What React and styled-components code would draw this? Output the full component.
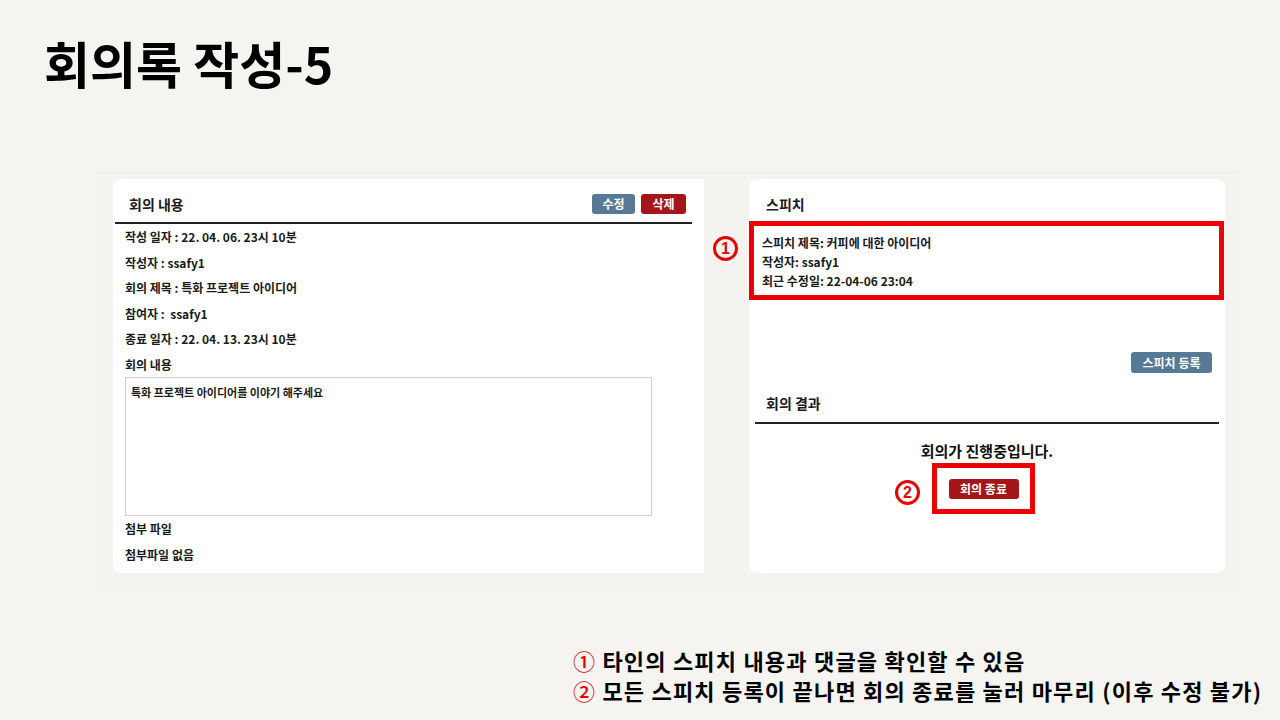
import React from "react";
import styled, { createGlobalStyle } from "styled-components";

const GlobalStyle = createGlobalStyle`
  html, body {
    margin: 0;
    padding: 0;
    background: #f5f4f0;
  }
  body {
    width: 1280px;
    height: 720px;
    overflow: hidden;
    font-family: "Noto Sans CJK KR", "Noto Sans", sans-serif;
    color: #111;
  }
  * { box-sizing: border-box; }
`;

const Slide = styled.div`
  width: 1280px;
  height: 720px;
  display: flex;
  flex-direction: column;
`;

const Title = styled.h1`
  margin: 34px 0 0 44px;
  font-size: 50px;
  line-height: 56px;
  font-weight: 700;
  letter-spacing: 0;
  color: #000;
`;

const Frame = styled.div`
  margin: 82px 0 0 96px;
  width: 1142px;
  height: 416px;
  background: #f4f3ef;
  border-top: 1px solid #ebeae5;
  display: flex;
  gap: 45px;
  padding: 6px 13px 15px 17px;
`;

const Card = styled.section`
  width: ${(p) => p.$w}px;
  background: #fff;
  border-radius: ${(p) => (p.$square ? "8px 0 0 8px" : "8px")};
  display: flex;
  flex-direction: column;
`;

const LeftInner = styled.div`
  padding: 0 12px 0 2px;
`;

const CardHeader = styled.div`
  display: flex;
  align-items: center;
  justify-content: space-between;
  height: 20px;
  margin: ${(p) => p.$m || "15px 6px 8px 14px"};
`;

const HeaderText = styled.h2`
  margin: 0;
  font-size: 14px;
  line-height: 20px;
  font-weight: 700;
  color: #1a1a1a;
`;

const ButtonGroup = styled.div`
  display: flex;
  gap: 6px;
`;

const Btn = styled.button`
  border: none;
  border-radius: 3px;
  height: ${(p) => p.$h || 20}px;
  width: ${(p) => p.$w}px;
  padding: 0;
  background: ${(p) => (p.$tone === "red" ? "#a3161a" : "#567a95")};
  color: #fff;
  font-family: "Noto Sans CJK KR", sans-serif;
  font-size: 12px;
  font-weight: 700;
  line-height: 1;
`;

const Divider = styled.div`
  height: 2px;
  background: #222;
  margin: ${(p) => p.$m || "0"};
`;

const Body = styled.div`
  padding-left: 10px;
`;

const Row = styled.div`
  font-size: 12px;
  line-height: 25.5px;
  height: 25.5px;
  font-weight: 600;
  color: #1a1a1a;
  white-space: pre;
`;

const ContentBox = styled.div`
  width: 527px;
  height: 139px;
  border: 1px solid #cfcfcf;
  padding: 6px 5px;
  font-size: 11px;
  line-height: 16px;
  font-weight: 600;
  color: #1a1a1a;
`;

const SpeechBox = styled.div`
  position: relative;
  margin-right: 1px;
  border: 5px solid #ee0000;
  padding: 7px 8px 5px;
`;

const SpeechLine = styled.div`
  font-size: 12px;
  line-height: 19px;
  font-weight: 600;
  color: #1a1a1a;
`;

const Marker = styled.span`
  position: absolute;
  left: ${(p) => p.$l}px;
  top: ${(p) => p.$t}px;
  width: 25px;
  height: 25px;
  border-radius: 50%;
  border: 3px solid #e60000;
  color: #e60000;
  font-size: 16px;
  font-weight: 700;
  line-height: 1;
  display: flex;
  align-items: center;
  justify-content: center;
  font-family: "Liberation Sans", sans-serif;
`;

const ActionRow = styled.div`
  display: flex;
  justify-content: flex-end;
  padding-right: 13px;
  margin-top: 52px;
`;

const Result = styled.div`
  display: flex;
  flex-direction: column;
  align-items: center;
  padding-top: 17px;
`;

const ResultText = styled.p`
  margin: 0;
  font-size: 15px;
  line-height: 20px;
  font-weight: 600;
  color: #111;
`;

const HighlightBox = styled.div`
  position: relative;
  margin: 2px 7px 0 0;
  width: 103px;
  height: 51px;
  border: 5px solid #ee0000;
  display: flex;
  align-items: center;
  justify-content: center;
`;

const Notes = styled.div`
  margin: 57px 0 0 573px;
`;

const NoteLine = styled.p`
  margin: 0;
  font-size: 22px;
  line-height: 30px;
  font-weight: 700;
  color: #000;
  white-space: nowrap;
  letter-spacing: 1.2px;
`;

const NoteNum = styled.span`
  color: #e60000;
  font-weight: 500;
`;

export default function App() {
  return (
    <>
      <GlobalStyle />
      <Slide>
        <Title>회의록 작성-5</Title>
        <Frame>
          <Card $w={591} $square>
            <LeftInner>
              <CardHeader>
                <HeaderText>회의 내용</HeaderText>
                <ButtonGroup>
                  <Btn $w={43}>수정</Btn>
                  <Btn $w={45} $tone="red">삭제</Btn>
                </ButtonGroup>
              </CardHeader>
              <Divider />
              <Body>
                <Row>작성 일자 : 22. 04. 06. 23시 10분</Row>
                <Row>작성자 : ssafy1</Row>
                <Row>회의 제목 : 특화 프로젝트 아이디어</Row>
                <Row>참여자 :  ssafy1</Row>
                <Row>종료 일자 : 22. 04. 13. 23시 10분</Row>
                <Row>회의 내용</Row>
                <ContentBox>특화 프로젝트 아이디어를 이야기 해주세요</ContentBox>
                <Row>첨부 파일</Row>
                <Row>첨부파일 없음</Row>
              </Body>
            </LeftInner>
          </Card>
          <Card $w={476}>
            <CardHeader $m="15px 6px 7px 17px">
              <HeaderText>스피치</HeaderText>
            </CardHeader>
            <SpeechBox>
              <Marker $l={-41} $t={10}>1</Marker>
              <SpeechLine>스피치 제목: 커피에 대한 아이디어</SpeechLine>
              <SpeechLine>작성자: ssafy1</SpeechLine>
              <SpeechLine>최근 수정일: 22-04-06 23:04</SpeechLine>
            </SpeechBox>
            <ActionRow>
              <Btn $w={81} $h={21}>스피치 등록</Btn>
            </ActionRow>
            <CardHeader $m="20px 6px 9px 17px">
              <HeaderText>회의 결과</HeaderText>
            </CardHeader>
            <Divider $m="0 6px" />
            <Result>
              <ResultText>회의가 진행중입니다.</ResultText>
              <HighlightBox>
                <Marker $l={-42} $t={12}>2</Marker>
                <Btn $w={70} $tone="red">회의 종료</Btn>
              </HighlightBox>
            </Result>
          </Card>
        </Frame>
        <Notes>
          <NoteLine>
            <NoteNum>①</NoteNum> 타인의 스피치 내용과 댓글을 확인할 수 있음
          </NoteLine>
          <NoteLine>
            <NoteNum>②</NoteNum> 모든 스피치 등록이 끝나면 회의 종료를 눌러 마무리 (이후 수정 불가)
          </NoteLine>
        </Notes>
      </Slide>
    </>
  );
}
